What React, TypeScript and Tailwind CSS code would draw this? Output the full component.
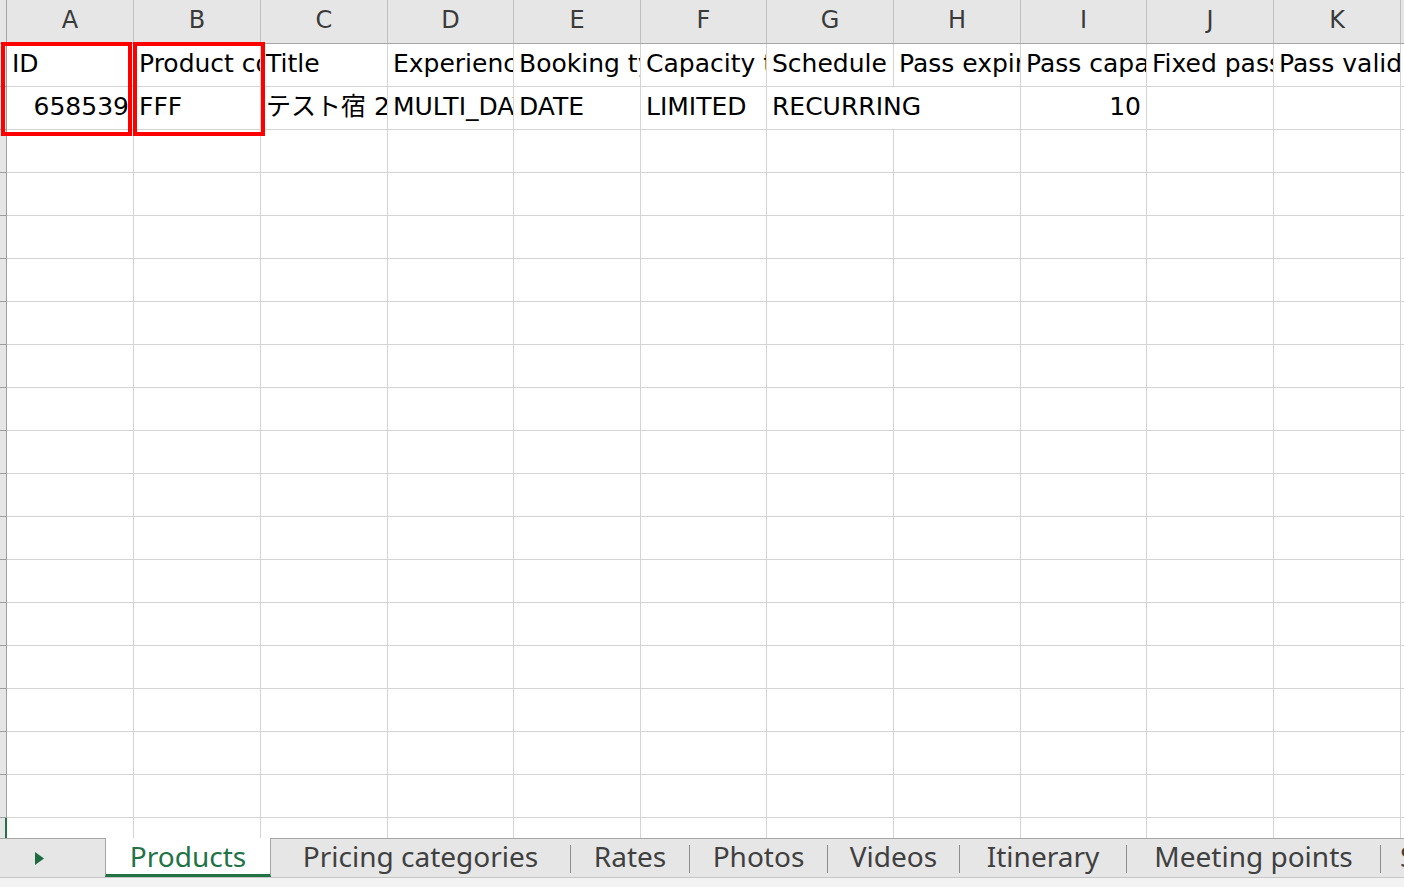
import React from "react";

const colWidths = [
  "w-[127px]",
  "w-[127px]",
  "w-[127px]",
  "w-[126px]",
  "w-[127px]",
  "w-[126px]",
  "w-[127px]",
  "w-[127px]",
  "w-[126px]",
  "w-[127px]",
  "w-[127px]",
  "w-[127px]",
];

const letters = ["A", "B", "C", "D", "E", "F", "G", "H", "I", "J", "K", "L"];

const headerRow = [
  "ID",
  "Product code",
  "Title",
  "Experience type",
  "Booking type",
  "Capacity type",
  "Schedule type",
  "Pass expiry",
  "Pass capacity",
  "Fixed pass",
  "Pass validity",
  "Pass validity unit",
];

const tabs = [
  { name: "Pricing categories", w: "w-[299px]" },
  { name: "Rates", w: "w-[118px]" },
  { name: "Photos", w: "w-[137px]" },
  { name: "Videos", w: "w-[131px]" },
  { name: "Itinerary", w: "w-[166px]" },
  { name: "Meeting points", w: "w-[253px]" },
];

const cellBase =
  "h-[43px] shrink-0 overflow-hidden whitespace-nowrap border-r border-b border-[#d4d4d4] leading-[40px] text-[25px] font-['DejaVu_Sans','Noto_Sans_CJK_JP',sans-serif]";

// left strip with the little row ticks
const RowStrip = ({ last }: { last?: boolean }) => (
  <div
    className={
      last
        ? "w-[7px] shrink-0 h-full bg-[#e6e6e6] border-r-2 border-[#217346]"
        : "w-[7px] shrink-0 h-[43px] bg-[#e6e6e6] border-r border-b border-[#9e9e9e]"
    }
  />
);

const EmptyRow = () => (
  <div className="flex">
    <RowStrip />
    {colWidths.map((w, i) => (
      <div key={i} className={`${cellBase} ${w}`} />
    ))}
  </div>
);

const App = () => {
  return (
    <div className="relative w-[1404px] h-[887px] overflow-hidden bg-white font-['Noto_Sans','Noto_Sans_CJK_JP',sans-serif] text-black">
      {/* column headers */}
      <div className="flex h-[44px] bg-[#e6e6e6] border-b border-[#a6a6a6]">
        <div className="w-[7px] shrink-0 border-r border-[#a6a6a6]" />
        {letters.map((l, i) => (
          <div
            key={l}
            className={`${colWidths[i]} shrink-0 border-r border-[#bfbfbf] text-center text-[24px] leading-[40px] text-[#3a3a3a] font-['DejaVu_Sans',sans-serif]`}
          >
            {l}
          </div>
        ))}
      </div>

      {/* sheet body */}
      <div className="h-[794px] overflow-hidden">
        <div className="flex">
          <RowStrip />
          {headerRow.map((t, i) => (
            <div key={i} className={`${cellBase} ${colWidths[i]} pl-[5px]`}>
              {t}
            </div>
          ))}
        </div>

        <div className="flex">
          <RowStrip />
          <div className={`${cellBase} ${colWidths[0]} pr-[4px] text-right`}>658539</div>
          <div className={`${cellBase} ${colWidths[1]} pl-[5px]`}>FFF</div>
          <div className={`${cellBase} ${colWidths[2]} pl-[5px]`}>テスト宿 2泊3日</div>
          <div className={`${cellBase} ${colWidths[3]} pl-[5px]`}>MULTI_DAY</div>
          <div className={`${cellBase} ${colWidths[4]} pl-[5px]`}>DATE</div>
          <div className={`${cellBase} ${colWidths[5]} pl-[5px]`}>LIMITED</div>
          {/* RECURRING spills into H, so no grid line between */}
          <div className={`${cellBase} w-[254px] pl-[5px]`}>RECURRING</div>
          <div className={`${cellBase} ${colWidths[8]} pr-[5px] text-right`}>10</div>
          <div className={`${cellBase} ${colWidths[9]}`} />
          <div className={`${cellBase} ${colWidths[10]}`} />
          <div className={`${cellBase} ${colWidths[11]}`} />
        </div>

        {Array.from({ length: 16 }).map((_, i) => (
          <EmptyRow key={i} />
        ))}

        <div className="flex h-[30px]">
          <RowStrip last />
          {colWidths.map((w, i) => (
            <div key={i} className={`${w} shrink-0 h-full border-r border-[#d4d4d4]`} />
          ))}
        </div>
      </div>

      {/* sheet tabs */}
      <div className="flex h-[39px] bg-[#e6e6e6]">
        <div className="w-[105px] shrink-0 border-t border-[#a6a6a6] flex items-center pl-[35px]">
          <svg width="9" height="13" viewBox="0 0 9 13">
            <path d="M0 0 L9 6.5 L0 13 Z" fill="#1d6b40" />
          </svg>
        </div>
        <div className="w-[166px] shrink-0 bg-white border-l border-r border-[#a6a6a6] border-b-[3px] border-b-[#217346] text-center text-[28px] leading-[28px] pt-[4px] text-[#217346]">
          Products
        </div>
        <div className="flex flex-1 border-t border-[#a6a6a6]">
          {tabs.map((t) => (
            <React.Fragment key={t.name}>
              <div
                className={`${t.w} shrink-0 text-center text-[28px] leading-[28px] pt-[3px] text-[#404040] whitespace-nowrap`}
              >
                {t.name}
              </div>
              <span className="w-px h-[28px] mt-[6px] shrink-0 bg-[#8c8c8c]" />
            </React.Fragment>
          ))}
          <div className="shrink-0 pl-[19px] text-[28px] leading-[28px] pt-[3px] text-[#404040] whitespace-nowrap">
            Start times
          </div>
        </div>
      </div>
      <div className="h-[10px] bg-[#f3f3f3] border-t border-[#c6c6c6]" />

      {/* red annotation boxes */}
      <div className="absolute left-[1px] top-[42px] w-[131px] h-[94px] border-4 border-[#ff0000]" />
      <div className="absolute left-[133px] top-[42px] w-[132px] h-[94px] border-4 border-[#ff0000]" />
    </div>
  );
};

export default App;
